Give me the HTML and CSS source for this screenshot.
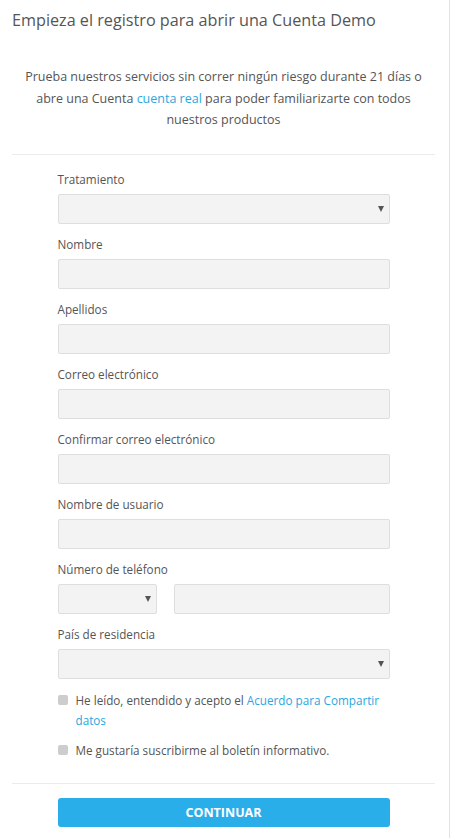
FILE: index.html
```html
<!DOCTYPE html>
<html lang="es">
<head>
<meta charset="utf-8">
<title>Cuenta Demo</title>
<link rel="stylesheet" href="styles.css">
</head>
<body>
<div class="page">
  <h1 class="title">Empieza el registro para abrir una Cuenta Demo</h1>
  <p class="intro">Prueba nuestros servicios sin correr ningún riesgo durante 21 días o abre una Cuenta <a href="#" class="link">cuenta real</a> para poder familiarizarte con todos nuestros productos</p>
  <hr class="divider">
  <form class="form">
    <label class="label">Tratamiento</label>
    <div class="field select"><span class="arrow"></span></div>
    <label class="label">Nombre</label>
    <div class="field"></div>
    <label class="label">Apellidos</label>
    <div class="field"></div>
    <label class="label">Correo electrónico</label>
    <div class="field"></div>
    <label class="label">Confirmar correo electrónico</label>
    <div class="field"></div>
    <label class="label">Nombre de usuario</label>
    <div class="field"></div>
    <label class="label">Número de teléfono</label>
    <div class="phone">
      <div class="field select prefix"><span class="arrow"></span></div>
      <div class="field number"></div>
    </div>
    <label class="label">País de residencia</label>
    <div class="field select"><span class="arrow"></span></div>
    <div class="check first"><span class="box"></span><span class="check-text">He leído, entendido y acepto el <a href="#" class="link">Acuerdo para Compartir datos</a></span></div>
    <div class="check"><span class="box"></span><span class="check-text">Me gustaría suscribirme al boletín informativo.</span></div>
  </form>
  <hr class="divider bottom">
  <div class="actions">
    <button type="button" class="btn">CONTINUAR</button>
  </div>
</div>
</body>
</html>
```

FILE: styles.css
```css
html, body {
  margin: 0;
  padding: 0;
  background: #fff;
}
body {
  font-family: "Open Sans", "Noto Sans", sans-serif;
  color: #555;
}
.page {
  width: 423px;
  min-height: 838px;
  padding: 0 14px 0 12px;
  border-right: 1px solid #e2e2e2;
}
.title {
  margin: 0;
  padding-top: 8px;
  font-size: 16.2px;
  font-weight: 400;
  line-height: 25px;
  color: #555;
}
.intro {
  margin: 33px 10px 0;
  font-size: 12.5px;
  line-height: 21.5px;
  text-align: center;
  color: #555;
}
.link {
  color: #2aa7e0;
  text-decoration: none;
}
.divider {
  margin: 23px 0 0;
  border: 0;
  border-top: 1px solid #ebebeb;
  height: 0;
}
.form {
  width: 332px;
  margin: 14px auto 0;
  display: flex;
  flex-direction: column;
}
.label {
  display: block;
  font-size: 11.7px;
  line-height: 20px;
  margin-top: 10px;
  margin-bottom: 5px;
  color: #555;
}
.label:first-child {
  margin-top: 0;
}
.field {
  height: 30px;
  box-sizing: border-box;
  background: #f3f3f3;
  border: 1px solid #dedede;
  border-radius: 2px;
  position: relative;
}
.arrow {
  position: absolute;
  right: 5px;
  top: 11px;
  width: 0;
  height: 0;
  border-left: 3.5px solid transparent;
  border-right: 3.5px solid transparent;
  border-top: 6px solid #555;
}
.phone {
  display: flex;
  gap: 17px;
}
.prefix {
  width: 99px;
  flex: none;
}
.number {
  flex: 1;
}
.check {
  display: flex;
  align-items: flex-start;
  gap: 8px;
  font-size: 11.7px;
  line-height: 20px;
  margin-top: 10px;
}
.check.first {
  margin-top: 11px;
}
.box {
  flex: none;
  width: 10px;
  height: 10px;
  margin-top: 5px;
  background: #cdcdcd;
  border-radius: 2px;
}
.check-text {
  color: #555;
}
.divider.bottom {
  margin-top: 23px;
}
.actions {
  width: 332px;
  margin: 14px auto 0;
}
.btn {
  display: block;
  width: 100%;
  height: 29px;
  border: 0;
  border-radius: 3px;
  background: #29aeea;
  color: #fff;
  font-family: "Open Sans", "Noto Sans", sans-serif;
  font-size: 12.5px;
  font-weight: 700;
  cursor: pointer;
}
```
